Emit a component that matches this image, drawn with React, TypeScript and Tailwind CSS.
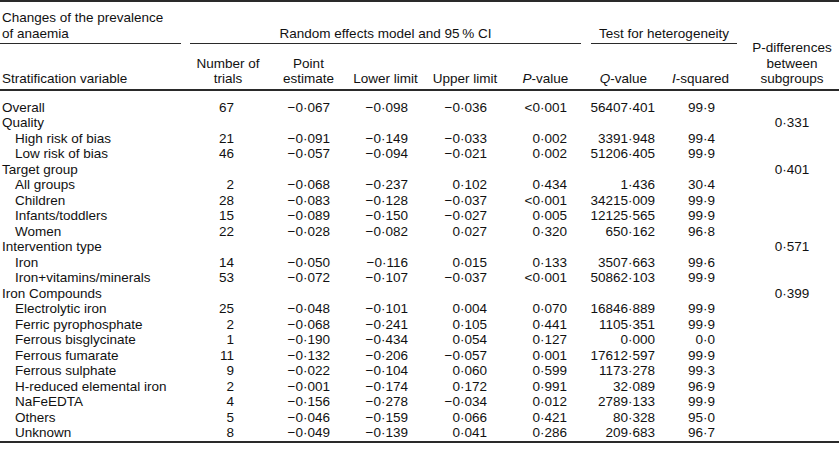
const cols =
  "grid grid-cols-[186px_84px_77px_77px_82px_79px_77px_77px_100px]";

type Row = {
  label: string;
  sub?: boolean;
  v?: string[];
  pd?: string;
};

const rows: Row[] = [
  { label: "Overall", v: ["67", "−0·067", "−0·098", "−0·036", "<0·001", "56407·401", "99·9"] },
  { label: "Quality", pd: "0·331" },
  { label: "High risk of bias", sub: true, v: ["21", "−0·091", "−0·149", "−0·033", "0·002", "3391·948", "99·4"] },
  { label: "Low risk of bias", sub: true, v: ["46", "−0·057", "−0·094", "−0·021", "0·002", "51206·405", "99·9"] },
  { label: "Target group", pd: "0·401" },
  { label: "All groups", sub: true, v: ["2", "−0·068", "−0·237", "0·102", "0·434", "1·436", "30·4"] },
  { label: "Children", sub: true, v: ["28", "−0·083", "−0·128", "−0·037", "<0·001", "34215·009", "99·9"] },
  { label: "Infants/toddlers", sub: true, v: ["15", "−0·089", "−0·150", "−0·027", "0·005", "12125·565", "99·9"] },
  { label: "Women", sub: true, v: ["22", "−0·028", "−0·082", "0·027", "0·320", "650·162", "96·8"] },
  { label: "Intervention type", pd: "0·571" },
  { label: "Iron", sub: true, v: ["14", "−0·050", "−0·116", "0·015", "0·133", "3507·663", "99·6"] },
  { label: "Iron+vitamins/minerals", sub: true, v: ["53", "−0·072", "−0·107", "−0·037", "<0·001", "50862·103", "99·9"] },
  { label: "Iron Compounds", pd: "0·399" },
  { label: "Electrolytic iron", sub: true, v: ["25", "−0·048", "−0·101", "0·004", "0·070", "16846·889", "99·9"] },
  { label: "Ferric pyrophosphate", sub: true, v: ["2", "−0·068", "−0·241", "0·105", "0·441", "1105·351", "99·9"] },
  { label: "Ferrous bisglycinate", sub: true, v: ["1", "−0·190", "−0·434", "0·054", "0·127", "0·000", "0·0"] },
  { label: "Ferrous fumarate", sub: true, v: ["11", "−0·132", "−0·206", "−0·057", "0·001", "17612·597", "99·9"] },
  { label: "Ferrous sulphate", sub: true, v: ["9", "−0·022", "−0·104", "0·060", "0·599", "1173·278", "99·3"] },
  { label: "H-reduced elemental iron", sub: true, v: ["2", "−0·001", "−0·174", "0·172", "0·991", "32·089", "96·9"] },
  { label: "NaFeEDTA", sub: true, v: ["4", "−0·156", "−0·278", "−0·034", "0·012", "2789·133", "99·9"] },
  { label: "Others", sub: true, v: ["5", "−0·046", "−0·159", "0·066", "0·421", "80·328", "95·0"] },
  { label: "Unknown", sub: true, v: ["8", "−0·049", "−0·139", "0·041", "0·286", "209·683", "96·7"] },
];

// right padding of each numeric column so the values line up as in the print
const pads = ["pr-[36px]", "pr-[17px]", "pr-[16px]", "pr-[19px]", "pr-[18px]", "pr-[7px]", "pr-[24px]"];

export default function App() {
  return (
    <div className="w-[839px] h-[451px] bg-white text-[#111] font-['Liberation_Sans',Arial,sans-serif] text-[13.5px] leading-[15.5px]">
      <div className="h-[2px] bg-[#2a2a2a]" />

      {/* Header */}
      <div className={`${cols} grid-rows-[34px_45px] items-end pt-[8px]`}>
        <div className="mr-[5px] pl-[2px] pb-[2px] border-b border-[#2a2a2a]">
          Changes of the prevalence
          <br />
          of anaemia
        </div>
        <div className="col-span-5 ml-[4px] mr-[4px] pb-[2px] border-b border-[#2a2a2a] text-center">
          Random effects model and 95&#8201;% CI
        </div>
        <div className="col-span-2 ml-[6px] mr-[2px] pb-[2px] border-b border-[#2a2a2a] text-center">
          Test for heterogeneity
        </div>
        <div className="row-span-2 pl-[6px] pb-[2.2px] text-center">
          P-differences
          <br />
          between
          <br />
          subgroups
        </div>

        <div className="pl-[2px] pb-[2.2px]">Stratification variable</div>
        <div className="pb-[2.2px] text-center">
          Number of
          <br />
          trials
        </div>
        <div className="pb-[2.2px] text-center">
          Point
          <br />
          estimate
        </div>
        <div className="pb-[2.2px] text-center">Lower limit</div>
        <div className="pb-[2.2px] text-center">Upper limit</div>
        <div className="pb-[2.2px] text-center">
          <i>P</i>-value
        </div>
        <div className="pb-[2.2px] text-center">
          <i>Q</i>-value
        </div>
        <div className="pb-[2.2px] text-center">
          <i>I</i>-squared
        </div>
      </div>
      <div className="h-[2px] bg-[#2a2a2a]" />

      {/* Body */}
      <div className="pt-[8.5px] pb-[0.5px]">
        {rows.map((r) => (
          <div key={r.label} className={`${cols} h-[15.5px] whitespace-nowrap`}>
            <div className={r.sub ? "pl-[15px]" : "pl-[2px]"}>{r.label}</div>
            {(r.v ?? ["", "", "", "", "", "", ""]).map((x, i) => (
              <div key={i} className={`text-right ${pads[i]}`}>
                {x}
              </div>
            ))}
            <div className="pl-[6px] text-center">{r.pd ?? ""}</div>
          </div>
        ))}
      </div>
      <div className="h-[2px] bg-[#2a2a2a]" />
    </div>
  );
}
